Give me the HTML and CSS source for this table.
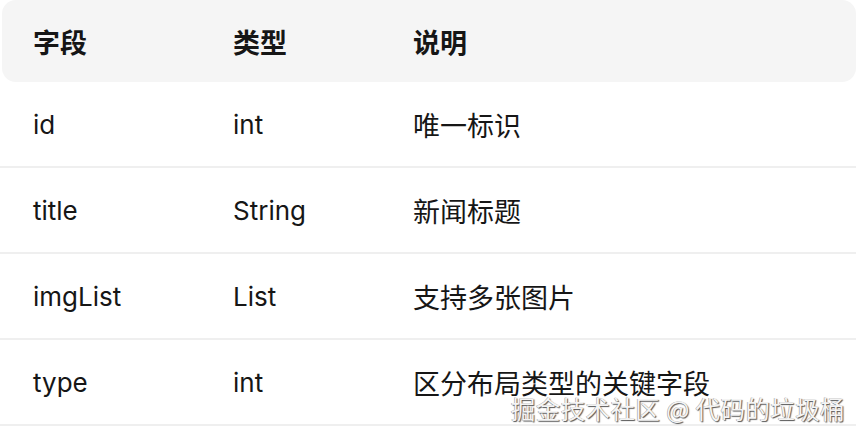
FILE: index.html
```html
<!DOCTYPE html>
<html lang="zh">
<head>
<meta charset="utf-8">
<link rel="stylesheet" href="styles.css">
</head>
<body>
<div class="page">
  <div class="table">
    <div class="row head">
      <div class="zh">字段</div><div class="zh">类型</div><div class="zh">说明</div>
    </div>
    <div class="row">
      <div>id</div><div>int</div><div class="zh">唯一标识</div>
    </div>
    <div class="row">
      <div>title</div><div>String</div><div class="zh">新闻标题</div>
    </div>
    <div class="row">
      <div>imgList</div><div>List</div><div class="zh">支持多张图片</div>
    </div>
    <div class="row">
      <div>type</div><div>int</div><div class="zh">区分布局类型的关键字段</div>
    </div>
  </div>
  <div class="watermark">掘金技术社区 @ 代码的垃圾桶</div>
</div>
</body>
</html>
```
FILE: styles.css
```css
html, body {
  margin: 0;
  padding: 0;
  background: #ffffff;
}
.page {
  position: relative;
  width: 862px;
  height: 438px;
  overflow: hidden;
  font-family: Inter, "Noto Sans CJK SC", sans-serif;
  color: #161616;
}
.table {
  width: 856px;
  display: flex;
  flex-direction: column;
}
.row {
  display: grid;
  grid-template-columns: 200px 180px 1fr;
  align-items: center;
  height: 84px;
  padding-left: 33px;
  font-size: 26px;
  border-bottom: 2px solid #efefef;
}
.row.head {
  height: 82px;
  margin-left: 2px;
  padding-left: 31px;
  background: #f5f5f5;
  border-radius: 14px;
  border-bottom: none;
  font-weight: 700;
}
.zh {
  font-size: 27px;
}
.watermark {
  position: absolute;
  right: 17px;
  top: 391px;
  font-family: "Noto Sans CJK SC", sans-serif;
  font-size: 24.5px;
  color: #f4f4f4;
  text-shadow: 1px 1px 1px #555, -0.5px -0.5px 0 #999;
  letter-spacing: 0.4px;
}
```
